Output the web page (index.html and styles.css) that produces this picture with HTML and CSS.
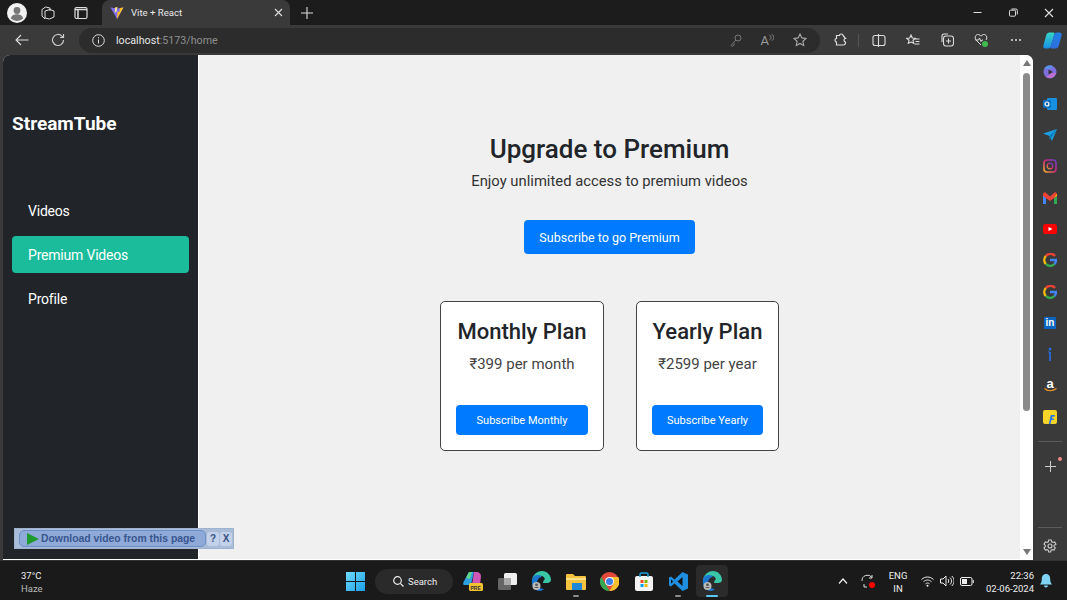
FILE: index.html
```html
<!DOCTYPE html>
<html lang="en">
<head>
<meta charset="utf-8">
<title>Vite + React</title>
<link rel="stylesheet" href="styles.css">
</head>
<body>
<div class="tabbar">
  <div class="tabbar-left">
    <svg class="avatar" width="20" height="20" viewBox="0 0 20 20"><circle cx="10" cy="10" r="10" fill="#f2f2f2"/><circle cx="10" cy="7.5" r="3.4" fill="#777"/><path d="M3.8 15.5c1-3.4 3.4-4.2 6.2-4.2s5.200.8 6.200 4.200a9 9 0 0 1-12.400 0z" fill="#777"/></svg>
    <svg class="ic-workspaces" width="14" height="14" viewBox="0 0 14 14" fill="none" stroke="#ddd"><path d="M1 3.500 4.500 1 9 2v3M1 3.500V10l3 3M4 5l5-1.500 4 1.500v6l-4.500 2L4 12z"/></svg>
    <svg class="ic-tabs" width="14" height="14" viewBox="0 0 14 14" fill="none" stroke="#ddd" stroke-width="1.200"><rect x="1" y="1.500" width="12" height="11" rx="1.500"/><path d="M1 3.500h12M4 3.500v9" stroke-width="1.500"/></svg>
  </div>
  <div class="tab">
    <svg width="14" height="14" viewBox="0 0 14 14"><path d="M0.500 1.500 7 13 13.500 1.500 9.500 2.200 7 2.200 4 2z" fill="#7f6cf5"/><path d="M7 13 7.500 5.500 9.500 6 9.800 2 13.500 1.500z" fill="#fbbf24"/><path d="M7.500 1 5 1.600 4.800 6.500 6.400 6z" fill="#fde68a"/></svg>
    <span class="tab-title">Vite + React</span>
    <span class="tab-close">
      <svg width="9" height="9" viewBox="0 0 9 9" stroke="#ddd" stroke-width="1.100"><path d="M1 1l7 7M8 1 1 8"/></svg>
    </span>
  </div>
  <svg class="newtab" width="12" height="12" viewBox="0 0 12 12" stroke="#ddd" stroke-width="1.100"><path d="M6 0v12M0 6h12"/></svg>
  <div class="window-controls">
    <svg width="9" height="9" viewBox="0 0 9 9" stroke="#ddd"><path d="M0.500 4.500h8"/></svg>
    <svg width="9" height="9" viewBox="0 0 9 9" fill="none" stroke="#ddd"><rect x="0.500" y="2.200" width="6" height="6" rx="1"/><path d="M2.500 1h4.500a1.300 1.300 0 0 1 1.300 1.300V6.500"/></svg>
    <svg width="10" height="10" viewBox="0 0 10 10" stroke="#ddd" stroke-width="1.100"><path d="M1 1l8 8M9 1 1 9"/></svg>
  </div>
</div>

<div class="toolbar">
  <svg class="tb-back" width="14" height="12" viewBox="0 0 14 12" fill="none" stroke="#ddd" stroke-width="1.100"><path d="M13.500 6H1M6 1 1 6l5 5"/></svg>
  <svg class="tb-reload" width="14" height="14" viewBox="0 0 14 14" fill="none" stroke="#ccc" stroke-width="1.200"><path d="M12.500 7a5.500 5.500 0 1 1-1.600-3.900L12.500 4.500M12.500 1v3.500H9"/></svg>
  <div class="addressbar">
    <svg class="ab-info" width="13" height="13" viewBox="0 0 13 13" fill="none" stroke="#ddd"><circle cx="6.500" cy="6.500" r="5.800"/><path d="M6.500 5.500v4M6.500 3.200v1.200"/></svg>
    <span class="url"><span class="host">localhost</span>:5173/home</span>
    <div class="ab-actions">
      <svg width="12" height="13" viewBox="0 0 12 13" fill="none" stroke="#777"><circle cx="8" cy="4" r="3"/><path d="M6 6 1 11.500 2.500 12.500 3.800 11 4.500 9.500"/></svg>
      <span class="aa">A<svg width="5" height="7" viewBox="0 0 5 7" fill="none" stroke="#999" stroke-width="0.800"><path d="M0.500 1c2 1 2 4 0 5M2.500 0c3 2 3 5 0 7"/></svg></span>
      <svg width="14" height="14" viewBox="0 0 14 14" fill="none" stroke="#aaa" stroke-width="1.100"><path d="M7 1l1.800 3.900 4.200.5-3.100 2.900.8 4.200L7 10.400l-3.700 2.100.8-4.200L1 5.400l4.200-.5z"/></svg>
    </div>
  </div>
  <div class="tb-actions">
    <svg width="13" height="14" viewBox="0 0 13 14" fill="none" stroke="#ddd" stroke-width="1.200"><path d="M4 2.500c0-2 3.500-2 3.500 0h3v3c2 0 2 3.500 0 3.500v3h-7c-1 0-2-1-2-2V9c2 0 2-3.500 0-3.500z" transform="matrix(-1 0 0 1 13 0)"/></svg>
    <span class="tb-sep"></span>
    <svg width="14" height="13" viewBox="0 0 14 13" fill="none" stroke="#ddd" stroke-width="1.100"><rect x="1" y="1.500" width="12" height="10" rx="2"/><path d="M6.500 0v13"/></svg>
    <svg width="14" height="13" viewBox="0 0 14 13" fill="none" stroke="#ddd" stroke-width="1.100"><path d="M5 1l1.300 3 3 .3-2.300 2 .7 3L5 8l-2.700 1.300.7-3-2.300-2 3-.3zM9 5h4.500M9.500 7.500h4M8.500 10h5"/></svg>
    <svg width="14" height="14" viewBox="0 0 14 14" fill="none" stroke="#ddd" stroke-width="1.100"><path d="M2 9V3a2 2 0 0 1 2-2h4"/><rect x="3.500" y="3" width="10" height="10" rx="2.500"/><path d="M8.500 5.500v5M6 8h5"/></svg>
    <svg width="14" height="14" viewBox="0 0 14 14" fill="none" stroke="#ddd"><path d="M7 12 2 7C0 4.500 2 1 4.500 1.500 5.800 1.700 6.500 2.500 7 3.200 7.500 2.500 8.200 1.700 9.500 1.500 12 1 14 4.500 12 7"/><path d="M1.500 7h3l1-2 1.500 3.500L8 7h1"/><circle cx="11" cy="11" r="3" fill="#3fb950" stroke="none"/></svg>
    <span class="more"><i></i><i></i><i></i></span>
    <svg class="copilot" width="19" height="17" viewBox="0 0 19 17"><defs><linearGradient id="cpl" x1="0" y1="0" x2="0" y2="1"><stop offset="0" stop-color="#35d6c6"/><stop offset="1" stop-color="#1a8fe8"/></linearGradient><linearGradient id="cpr" x1="0" y1="0" x2="0" y2="1"><stop offset="0" stop-color="#1f7fe6"/><stop offset="1" stop-color="#2f6fdc"/></linearGradient></defs><path d="M6.500 .5h4c1.500 0 1 1.500.5 3L8 14c-.5 1.500-1.500 2.500-3 2.500H2.500C.5 16.500 0 15 .5 13L3 4C3.500 2 4.500.5 6.500.5z" fill="url(#cpl)"/><path d="M12.500 16.500h-4c-1.500 0-1-1.500-.5-3L11 3c.5-1.500 1.500-2.500 3-2.500h2.500c2 0 2.500 1.500 2 3.500L16 13c-.5 2-1.500 3.500-3.500 3.500z" fill="url(#cpr)"/></svg>
  </div>
</div>

<div class="middle">
  <div class="webview">
    <aside class="sidebar">
      <div class="brand">StreamTube</div>
      <nav class="nav">
        <a class="nav-item">Videos</a>
        <a class="nav-item active">Premium Videos</a>
        <a class="nav-item">Profile</a>
      </nav>
    </aside>
    <main class="main">
      <h1 class="headline">Upgrade to Premium</h1>
      <p class="lead">Enjoy unlimited access to premium videos</p>
      <button class="btn btn-go">Subscribe to go Premium</button>
      <div class="plans">
        <section class="plan plan-m">
          <h2>Monthly Plan</h2>
          <p>₹399 per month</p>
          <button class="btn btn-plan">Subscribe Monthly</button>
        </section>
        <section class="plan plan-y">
          <h2>Yearly Plan</h2>
          <p>₹2599 per year</p>
          <button class="btn btn-plan">Subscribe Yearly</button>
        </section>
      </div>
    </main>
    <div class="scrollbar">
      <span class="arrow-up"></span>
      <span class="thumb"></span>
      <span class="arrow-down"></span>
    </div>
    <div class="download-bar">
      <span class="dl-main"><span class="dl-play"></span>Download video from this page</span>
      <span class="dl-mini">?</span>
      <span class="dl-mini">X</span>
    </div>
  </div>
  <div class="rail">
    <div class="rail-apps">
      <svg width="14" height="14" viewBox="0 0 14 14"><circle cx="7" cy="7" r="6.500" fill="#7d6fe0"/><path d="M1 4a6.500 6.500 0 0 1 9-3L7 4z" fill="#5b8fe8"/><path d="M3 12a6.500 6.500 0 0 0 10-4L9 8z" fill="#c06fd0"/><path d="M5.500 4.500 10 7l-4.500 2.500z" fill="#333"/></svg>
      <svg width="14" height="14" viewBox="0 0 14 14"><rect x="4" y="1" width="10" height="12" rx="1" fill="#1490df"/><rect y="3" width="8" height="8" rx="1" fill="#0a6cbd"/><circle cx="4" cy="7" r="2" fill="none" stroke="#fff" stroke-width="1.200"/></svg>
      <svg width="14" height="12" viewBox="0 0 14 12"><path d="M0 4.500 14 0 9 12 6.500 7z" fill="#1b9ee0"/><path d="M14 0 6.500 7 6.500 11z" fill="#0a78b8"/></svg>
      <svg width="14" height="14" viewBox="0 0 14 14"><defs><linearGradient id="ig" x1="0" y1="1" x2="1" y2="0"><stop offset="0" stop-color="#f9b233"/><stop offset=".5" stop-color="#d5277d"/><stop offset="1" stop-color="#6a3fc8"/></linearGradient></defs><rect x="1" y="1" width="12" height="12" rx="3" fill="none" stroke="url(#ig)" stroke-width="1.600"/><circle cx="7" cy="7" r="2.800" fill="none" stroke="url(#ig)" stroke-width="1.200"/></svg>
      <svg width="14" height="12" viewBox="0 0 14 12"><path d="M0 1.500V12h3V5z" fill="#4285f4"/><path d="M14 1.500V12h-3V5z" fill="#34a853"/><path d="M0 1.500 2 0 7 4.500 12 0l2 1.500V4L7 9 0 4z" fill="#ea4335"/><path d="M11 5l3-3V4z" fill="#fbbc04"/></svg>
      <svg width="14" height="10" viewBox="0 0 14 10"><rect width="14" height="10" rx="2.500" fill="#f00"/><path d="M5.500 3 9.500 5l-4 2z" fill="#fff"/></svg>
      <svg width="14" height="14" viewBox="0 0 14 14" fill="none" stroke-width="2.400"><path d="M12 3A6 6 0 0 0 2.800 3" stroke="#ea4335"/><path d="M2.800 3a6 6 0 0 0 0 8" stroke="#fbbc04"/><path d="M2.800 11a6 6 0 0 0 8.700 0" stroke="#34a853"/><path d="M7 7h6a6 6 0 0 1-1.500 4" stroke="#4285f4"/></svg>
      <svg width="14" height="14" viewBox="0 0 14 14" fill="none" stroke-width="2.400"><path d="M12 3A6 6 0 0 0 2.800 3" stroke="#ea4335"/><path d="M2.800 3a6 6 0 0 0 0 8" stroke="#fbbc04"/><path d="M2.800 11a6 6 0 0 0 8.700 0" stroke="#34a853"/><path d="M7 7h6a6 6 0 0 1-1.500 4" stroke="#4285f4"/></svg>
      <span class="app-in">in</span>
      <svg width="8" height="14" viewBox="0 0 8 14" fill="none" stroke="#2a6bdc" stroke-width="1.800"><path d="M4 5v9"/><path d="M2 5h2" stroke-width="1.200"/><circle cx="4" cy="2" r="1.500" fill="#2a6bdc" stroke="none"/></svg>
      <span class="app-amazon">a<svg width="13" height="4" viewBox="0 0 13 4" fill="none" stroke="#f0962a" stroke-width="1.200"><path d="M0.500 0.500c3 3 8 3 12 0"/></svg></span>
      <svg width="14" height="14" viewBox="0 0 14 14"><rect width="14" height="14" rx="2" fill="#f5d327"/><path d="M8 5h4l-.5 1.800H9.200L8.800 8.500H11l-.5 1.500H8.400L7.500 14H5.800L7.500 6z" fill="#2874f0"/></svg>
    </div>
    <span class="rail-sep"></span>
    <span class="rail-add">
      <svg width="11" height="11" viewBox="0 0 11 11" stroke="#ccc"><path d="M5.500 0v11M0 5.500h11"/></svg>
      <i class="rail-dot"></i>
    </span>
    <span class="rail-spacer"></span>
    <span class="rail-sep"></span>
    <svg class="rail-gear" width="14" height="14" viewBox="0 0 14 14" fill="none" stroke="#ccc" stroke-width="1.100"><path d="M5.700 1h2.600l.4 1.800 1.200.7 1.800-.5 1.300 2.200L11 6.400v1.200l1.300 1.300L11 11.100l-1.800-.5-1.200.7-.4 1.700H5.700l-.4-1.700-1.200-.7-1.800.5L1 8.900l1.300-1.300V6.400L1 5.200 2.300 3l1.800.5 1.200-.7z"/><circle cx="7" cy="7" r="2"/></svg>
  </div>
</div>

<footer class="taskbar">
  <div class="weather">
    <span class="temp">37°C</span>
    <span class="cond">Haze</span>
  </div>
  <div class="dock">
    <svg width="19" height="19" viewBox="0 0 19 19"><defs><linearGradient id="win" x1="0" y1="0" x2="1" y2="1"><stop offset="0" stop-color="#6fdcfb"/><stop offset="1" stop-color="#1a9fe8"/></linearGradient></defs><path d="M0 0h9v9H0zM10 0h9v9h-9zM0 10h9v9H0zM10 10h9v9h-9z" fill="url(#win)"/></svg>
    <div class="search">
      <svg width="11" height="11" viewBox="0 0 11 11" fill="none" stroke="#eee" stroke-width="1.200"><circle cx="4.500" cy="4.500" r="3.800"/><path d="M7.300 7.300 10.500 10.500"/></svg>
      <span>Search</span>
    </div>
    <span class="dock-item">
      <svg width="20" height="19" viewBox="0 0 20 19"><path d="M6 0h5L8 13H1C0 13 0 11 .5 10z" fill="#2d9fe0"/><path d="M11 0h3c2 0 4 2 4 4l-1 9H9z" fill="#d057b8"/><path d="M6 0h3L7 7 3 6z" fill="#5fd68a"/><rect x="6" y="11" width="14" height="8" rx="1.500" fill="#f2c230"/><text x="7.500" y="17.500" class="pre">PRE</text></svg>
    </span>
    <span class="dock-item">
      <svg width="19" height="17" viewBox="0 0 19 17"><rect y="5" width="13" height="12" rx="1.500" fill="#666"/><rect x="6" width="13" height="12" rx="1.500" fill="#eee"/><rect x="6" y="5" width="7" height="7" fill="#aaa"/></svg>
    </span>
    <span class="dock-item">
      <svg width="20" height="20" viewBox="0 0 20 20"><path d="M1 9C2 3 7 0 11 0c5 0 9 4 9 9 0 2-2 3-4 3h-4c0-2 1-3 2-4-1-3-4-4-6-3-2 .8-3 2-3 4z" fill="#38c6a6"/><path d="M1 9c0-3 3-5 6-5 2 0 3 1 4 2-3 0-5 3-5 6 0 3 3 6 7 6-1 1-3 2-4 2C4 20 0 15 1 9z" fill="#1b78d0"/><circle cx="5.500" cy="15" r="4" fill="#bbb"/><circle cx="5.500" cy="13.800" r="1.400" fill="#555"/><path d="M3 17c.5-1.500 4.500-1.500 5 0z" fill="#555"/></svg>
    </span>
    <span class="dock-item running">
      <svg width="20" height="17" viewBox="0 0 20 17"><path d="M0 2a1 1 0 0 1 1-1h6l2 2h10a1 1 0 0 1 1 1v12a1 1 0 0 1-1 1H1a1 1 0 0 1-1-1z" fill="#f6c33f"/><path d="M0 5h20v2H0z" fill="#ffe08a"/><rect x="6" y="10" width="10" height="7" fill="#1e88d8"/></svg>
    </span>
    <span class="dock-item">
      <svg width="19" height="19" viewBox="0 0 19 19"><circle cx="9.500" cy="9.500" r="9.500" fill="#e4483b"/><path d="M9.500 19A9.500 9.500 0 0 1 1.300 4.700L5.500 12l4 7z" fill="#34a853"/><path d="M9.500 5h8.800a9.500 9.500 0 0 1-8.800 14l4-7z" fill="#fbc02d"/><circle cx="9.500" cy="9.500" r="4.500" fill="#fff"/><circle cx="9.500" cy="9.500" r="3.500" fill="#3f7ee8"/></svg>
    </span>
    <span class="dock-item">
      <svg width="18" height="19" viewBox="0 0 18 19"><rect y="4" width="18" height="15" rx="2" fill="#f4f4f4"/><path d="M5 5V2.500a1.500 1.500 0 0 1 1.500-1.500h5A1.500 1.500 0 0 1 13 2.500V5" fill="none" stroke="#1aa0d8" stroke-width="1.500"/><path d="M5.500 8h3v3h-3z" fill="#f25022"/><path d="M9.500 8h3v3h-3z" fill="#7fba00"/><path d="M5.500 12h3v3h-3z" fill="#00a4ef"/><path d="M9.500 12h3v3h-3z" fill="#ffb900"/></svg>
    </span>
    <span class="dock-item running">
      <svg width="19" height="19" viewBox="0 0 19 19"><path d="M13.500 0 19 2.500v14L13.500 19 5.500 11.500 2 14.500 0 13.500V5.500L2 4.500l3.500 3z" fill="#1f8ee0"/><path d="M13.500 5 8.500 9.500l5 4.500z" fill="#111"/><path d="M2 7.500 4.200 9.500 2 11.500z" fill="#111"/></svg>
    </span>
    <span class="dock-item active">
      <svg width="20" height="20" viewBox="0 0 20 20"><path d="M1 9C2 3 7 0 11 0c5 0 9 4 9 9 0 2-2 3-4 3h-4c0-2 1-3 2-4-1-3-4-4-6-3-2 .8-3 2-3 4z" fill="#38c6a6"/><path d="M1 9c0-3 3-5 6-5 2 0 3 1 4 2-3 0-5 3-5 6 0 3 3 6 7 6-1 1-3 2-4 2C4 20 0 15 1 9z" fill="#1b78d0"/><circle cx="5.500" cy="15" r="4" fill="#bbb"/><circle cx="5.500" cy="13.800" r="1.400" fill="#555"/><path d="M3 17c.5-1.500 4.500-1.500 5 0z" fill="#555"/></svg>
    </span>
  </div>
  <div class="tray">
    <svg class="tray-chev" width="10" height="6" viewBox="0 0 10 6" fill="none" stroke="#eee" stroke-width="1.200"><path d="M1 5.500 5 1l4 4.500"/></svg>
    <svg class="tray-sync" width="15" height="15" viewBox="0 0 15 15" fill="none" stroke="#ddd"><path d="M1 7A5.500 5.500 0 0 1 11 3.500M11 1v3H8M3 10v3h3"/><circle cx="11" cy="11" r="3" fill="#f00" stroke="none"/></svg>
    <span class="lang"><span>ENG</span><span>IN</span></span>
    <svg width="13" height="11" viewBox="0 0 13 11" fill="none" stroke="#eee"><path d="M.5 3.500c3.500-3.300 8.500-3.300 12 0M2.500 5.700c2.500-2.200 5.500-2.200 8 0M4.500 7.800c1.300-1 2.700-1 4 0"/><circle cx="6.500" cy="9.800" r="1" fill="#eee" stroke="none"/></svg>
    <svg width="14" height="12" viewBox="0 0 14 12" fill="none" stroke="#eee"><path d="M.5 4v4H3l3 3V1L3 4zM8 4c1 1 1 3 0 4M10 2.500c2 2 2 5 0 7M11.800 1c3 3 3 7 0 10"/></svg>
    <svg width="14" height="9" viewBox="0 0 14 9" fill="none" stroke="#eee"><rect x=".5" y=".5" width="11.500" height="8" rx="1.500"/><rect x="2" y="2" width="5" height="5" fill="#eee" stroke="none"/><path d="M13.300 3v3"/></svg>
    <div class="clock"><span>22:36</span><span>02-06-2024</span></div>
    <svg class="tray-bell" width="12" height="14" viewBox="0 0 12 14"><path d="M6 0C3 0 1.800 2.500 1.800 5c0 2.500-.6 4-1.800 5.500h12C10.800 9 10.200 7.500 10.200 5 10.200 2.500 9 0 6 0z" fill="#7fd4f5"/><path d="M4 11.500a2 2 0 0 0 4 0z" fill="#7fd4f5"/></svg>
  </div>
</footer>
</body>
</html>
```

FILE: styles.css
```css
* { box-sizing: border-box; }
html, body { margin: 0; height: 100%; }
body {
  width: 1067px;
  height: 600px;
  overflow: hidden;
  display: flex;
  flex-direction: column;
  background: #3a3a3a;
  font-family: Roboto, "Open Sans", sans-serif;
  color: #212529;
}
svg { display: block; flex: none; }

/* tab strip */
.tabbar {
  height: 25px;
  flex: none;
  background: #1c1c1c;
  display: flex;
  align-items: center;
}
.tabbar-left { display: flex; align-items: center; width: 102px; padding-left: 7px; }
.ic-workspaces { margin-left: 14px; }
.ic-tabs { margin-left: 19px; }
.tab {
  width: 188px;
  height: 25px;
  align-self: flex-end;
  background: #3a3a3a;
  border-radius: 8px 8px 0 0;
  display: flex;
  align-items: center;
  padding: 0 7px 0 8px;
  color: #e8e8e8;
  font-size: 9.600px;
}
.tab-title { margin-left: 7px; flex: 1; }
.newtab { margin-left: 11px; }
.window-controls { margin-left: auto; width: 94px; padding-right: 13px; display: flex; justify-content: space-between; align-items: center; }

/* toolbar */
.toolbar {
  height: 30px;
  flex: none;
  background: #3a3a3a;
  display: flex;
  align-items: center;
  position: relative;
}
.tb-back { margin-left: 15px; }
.tb-reload { margin-left: 22px; }
.addressbar {
  margin-left: 14px;
  width: 741px;
  height: 25px;
  border-radius: 13px;
  background: #2c2c2c;
  display: flex;
  align-items: center;
  padding-left: 13px;
}
.url { margin-left: 11px; font-size: 10.700px; color: #8e8e8e; }
.host { color: #e6e6e6; }
.ab-actions { margin-left: auto; display: flex; align-items: center; gap: 19px; padding-right: 13px; }
.aa { display: flex; align-items: flex-start; font-size: 13px; line-height: 13px; color: #999; }
.tb-actions { margin-left: 14px; flex: 1; display: flex; align-items: center; gap: 20px; }
.tb-sep { width: 1px; height: 13px; background: #555; margin: 0 -7px 0 -9px; }
.more { display: flex; gap: 2px; margin-left: 3px; }
.more i { width: 2px; height: 2px; background: #ddd; border-radius: 50%; }
.copilot { margin-left: 2px; }

/* page */
.middle { flex: 1; min-height: 0; display: flex; padding-left: 3px; }
.webview {
  width: 1030px;
  display: flex;
  position: relative;
  border-radius: 7px 7px 0 0;
  overflow: hidden;
  border-bottom: 1px solid #fff;
  background: #f0f0f0;
}
.sidebar {
  width: 195px;
  flex: none;
  background: #212529;
  padding: 0 9px;
  color: #fff;
}
.brand {
  margin-top: 55px;
  font-size: 19px;
  line-height: 27px;
  font-weight: 700;
}
.nav { margin-top: 55px; display: flex; flex-direction: column; gap: 7px; }
.nav-item {
  height: 37px;
  padding-left: 16px;
  border-radius: 4px;
  font-size: 14px;
  letter-spacing: -0.200px;
  line-height: 38px;
  color: #fff;
}
.nav-item.active { background: #1abc9c; }

.main {
  flex: 1;
  min-width: 0;
  display: flex;
  flex-direction: column;
  align-items: center;
  background: #f0f0f0;
  border-left: 1px solid #fff;
  padding-top: 78px;
}
.headline { margin: 0; font-size: 26px; line-height: 33px; font-weight: 500; color: #212529; }
.lead { margin: 5px 0 0; font-size: 14.800px; line-height: 20px; color: #333; }
.btn {
  border: 0;
  border-radius: 4px;
  background: #007bff;
  color: #fff;
  font-family: inherit;
  padding: 0;
}
.btn-go { margin-top: 29px; width: 171px; height: 34px; font-size: 12.500px; }
.plans { margin-top: 47px; display: flex; gap: 32px; }
.plan {
  height: 150px;
  background: #fff;
  border: 1px solid #444;
  border-radius: 5px;
  padding: 16px 15px 0;
  display: flex;
  flex-direction: column;
  align-items: center;
}
.plan-m { width: 164px; }
.plan-y { width: 143px; }
.plan h2 { margin: 0; font-size: 22px; line-height: 28px; font-weight: 500; white-space: nowrap; color: #212529; }
.plan p { margin: 8px 0 0; font-size: 15px; line-height: 20px; color: #444; white-space: nowrap; }
.btn-plan { margin-top: 31px; width: 100%; height: 30px; font-size: 11px; flex: none; }

.scrollbar {
  width: 13px;
  flex: none;
  background: #fff;
  display: flex;
  flex-direction: column;
  align-items: center;
  padding-top: 5px;
}
.arrow-up { width: 0; height: 0; border: 4px solid transparent; border-top: 0; border-bottom: 6px solid #777; }
.thumb { width: 7px; height: 338px; margin-top: 7px; background: #8c8c8c; border-radius: 4px; }
.arrow-down { margin-top: auto; margin-bottom: 4px; width: 0; height: 0; border: 4px solid transparent; border-bottom: 0; border-top: 6px solid #777; }

.download-bar {
  position: absolute;
  left: 11px;
  bottom: 10px;
  width: 220px;
  height: 21px;
  background: #a9bdd9;
  border: 1px solid #9fb3d0;
  display: flex;
  align-items: center;
  padding-left: 4px;
  gap: 1px;
}
.dl-main {
  width: 187px;
  height: 17px;
  border: 1px solid #6b8fc6;
  border-radius: 5px;
  background: #8fa9d8;
  color: #38568e;
  font: 700 10.400px/15px "Liberation Sans", sans-serif;
  display: flex;
  align-items: center;
  padding-left: 7px;
  gap: 2px;
  white-space: nowrap;
}
.dl-play { width: 0; height: 0; border-style: solid; border-width: 6px 0 6px 12px; border-color: transparent transparent transparent #1f9a2f; }
.dl-mini {
  width: 12px;
  height: 14px;
  background: #c3d2ea;
  border-radius: 3px;
  color: #36507f;
  font: 700 10px/14px "Liberation Sans", sans-serif;
  text-align: center;
}

/* right rail */
.rail {
  flex: 1;
  display: flex;
  flex-direction: column;
  align-items: center;
  padding-top: 1.800px;
}
.rail-apps { display: grid; grid-auto-rows: 31.300px; place-items: center; }
.app-in {
  width: 12px;
  height: 12px;
  background: #0a66c2;
  color: #fff;
  font: 700 10px/12px "Liberation Sans", sans-serif;
  text-align: center;
  border-radius: 1px;
}
.app-amazon { color: #fff; font: 700 13px/9px "Liberation Sans", sans-serif; display: flex; flex-direction: column; align-items: center; }
.rail-sep { width: 24px; height: 1px; background: #5a5a5a; flex: none; }
.rail-sep:first-of-type { margin-top: 8.200px; }
.rail-add { position: relative; margin-top: 19px; }
.rail-dot { position: absolute; left: 13px; top: -4px; width: 4px; height: 4px; border-radius: 50%; background: #f08a8a; }
.rail-spacer { flex: 1; }
.rail-gear { margin: 11px 0 7px; }

/* taskbar */
.taskbar {
  height: 40px;
  flex: none;
  background: #1a1a1a;
  border-top: 1px solid #333;
  padding-top: 1px;
  display: flex;
  align-items: center;
  position: relative;
}
.weather { margin-left: 21px; width: 59px; padding-top: 2px; display: flex; flex-direction: column; font-size: 9.500px; line-height: 13px; color: #eee; }
.cond { color: #bbb; }
.dock { margin-left: 266px; display: flex; align-items: center; }
.search {
  margin-left: 10px;
  width: 78px;
  height: 25px;
  border-radius: 13px;
  background: #2a2a2a;
  color: #eee;
  font-size: 9.500px;
  display: flex;
  align-items: center;
  gap: 4px;
  padding-left: 18px;
}
.dock-item {
  width: 32px;
  height: 32px;
  margin-left: 2.200px;
  display: flex;
  align-items: center;
  justify-content: center;
  position: relative;
  border-radius: 4px;
}
.search + .dock-item { margin-left: 4px; }
.dock-item.running::after, .dock-item.active::after {
  content: "";
  position: absolute;
  bottom: 0;
  left: 13px;
  width: 6px;
  height: 2px;
  border-radius: 1px;
  background: #8a8a8a;
}
.dock-item.active { background: #2b2b2b; }
.dock-item.active::after { left: 10px; width: 12px; background: #5cc8f5; }
.pre { font: 700 5px "Liberation Sans", sans-serif; fill: #333; }
.tray { margin-left: auto; display: flex; align-items: center; gap: 6px; padding-right: 15px; color: #eee; font-size: 10px; }
.tray-chev { margin-right: 7px; }
.tray-sync { margin-right: 4.500px; }
.lang { display: flex; flex-direction: column; align-items: center; padding-top: 2px; line-height: 13px; width: 24px; margin-right: 5px; font-size: 9.500px; }
.clock { display: flex; flex-direction: column; align-items: flex-end; padding-top: 2px; line-height: 13px; margin-left: 6px; font-size: 9.500px; }
.tray-bell { margin-left: 0; }
```
